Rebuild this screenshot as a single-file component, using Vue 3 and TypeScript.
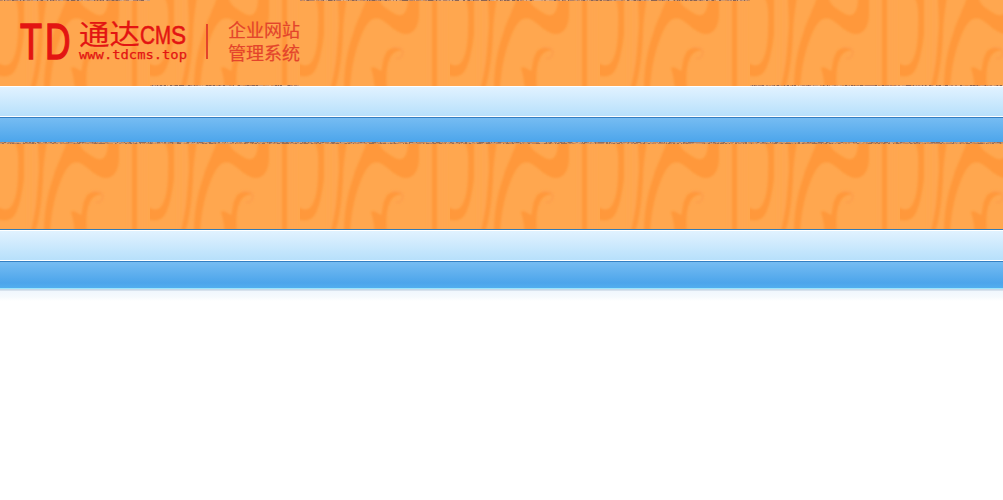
<script setup lang="ts">
interface Speck {
  x: number
  y: number
  w: number
  color: string
}

const tones = ['#8b6556', '#d29b70', '#b78262', '#e4ae7f', '#b58268', '#cba080', '#8a6450', '#d78d51']

function speckle(start: number, end: number, y: number, seed: number): Speck[] {
  const out: Speck[] = []
  let s = seed
  let x = start
  while (x < end) {
    s = (s * 16807) % 2147483647
    const w = Math.min(1 + (s % 2), end - x)
    out.push({ x, y, w, color: tones[(s >> 5) % tones.length] })
    x += w
  }
  return out
}

const headerSpecks: Speck[] = [
  ...speckle(0, 150, 0, 71),
  ...speckle(300, 750, 0, 913),
  ...speckle(150, 300, 85, 377),
  ...speckle(750, 1003, 85, 1291),
]
const seamSpecks: Speck[] = [...speckle(0, 1003, 0, 517), ...speckle(0, 1003, 1, 2909)]
</script>

<template>
  <div class="page">
    <header class="banner">
      <svg width="1003" height="86" viewBox="0 0 1003 86">
        <defs>
          <filter id="soft" x="-5%" y="-5%" width="110%" height="110%">
            <feGaussianBlur stdDeviation="1.2" />
          </filter>
          <pattern id="swirl" width="150" height="86" patternUnits="userSpaceOnUse">
            <rect width="150" height="86" fill="#ffa74f" />
            <g filter="url(#soft)">
              <path d="M28 -3V90M34 -3V90M128 -3V90M141 -3V90M146 -3V90" stroke="#ff9f58" stroke-width="1.5" opacity=".3" />
              <path d="M14 -3C18 2 19 12 18 30C18 48 14 63 8 65C4 66 1 65 -3 62V75C2 77 8 77 12 74C19 68 22 50 24 34V-3Z" fill="#ff983a" />
              <path d="M38 -3H47C45 10 43 22 43 36C42 54 40 72 35 90H30C36 69 37 52 38 38C40 22 38 10 38 -3Z" fill="#ff983a" />
              <path d="M67 -3H79C78 3 86 9 95 14C103 18 108 13 108 -3H119V14C119 26 114 34 106 34C96 34 90 24 80 19C71 15 65 26 61 36C55 51 51 68 50 90H44C44 66 48 48 53 34C57 20 64 8 67 -3Z" fill="#ff983a" />
              <path d="M102 51C96 46 88 47 85 55C82 61 83 67 81 71C77 69 74 66 71 68C73 74 74 80 75 90H87C86 77 86 66 90 58C93 52 97 50 102 51Z" fill="#ff983a" />
              <path d="M132 -3H137V90H132Z" fill="#ff983a" />
              <path d="M92 48Q102 46 103 52Q102 60 96 58" fill="none" stroke="#fc9c4c" stroke-width="2" opacity=".7" />
            </g>
          </pattern>
        </defs>
        <rect width="1003" height="86" fill="url(#swirl)" />
        <rect v-for="(p, i) in headerSpecks" :key="i" :x="p.x" :y="p.y" :width="p.w" height="1" :fill="p.color" />
        <g class="logo">
          <text class="latin td" x="20" y="58.6" textLength="22" lengthAdjust="spacingAndGlyphs">T</text>
          <text class="latin td" x="45" y="58.6" textLength="25.5" lengthAdjust="spacingAndGlyphs">D</text>
          <text class="cjk name" x="79" y="44.8" textLength="61" lengthAdjust="spacingAndGlyphs">通达</text>
          <text class="latin cms" x="140" y="44" textLength="15" lengthAdjust="spacingAndGlyphs">C</text>
          <text class="latin cms" x="155" y="44" textLength="16" lengthAdjust="spacingAndGlyphs">M</text>
          <text class="latin cms" x="171" y="44" textLength="15" lengthAdjust="spacingAndGlyphs">S</text>
          <text class="mono" x="79" y="59" textLength="108" lengthAdjust="spacingAndGlyphs">www.tdcms.top</text>
          <rect class="divider" x="206" y="24" width="2" height="35" />
          <text class="cjk slogan" x="228" y="36.6" textLength="72">企业网站</text>
          <text class="cjk slogan" x="228" y="59.6" textLength="72">管理系统</text>
        </g>
      </svg>
    </header>
    <div class="light-bar"></div>
    <div class="blue-bar"></div>
    <section class="banner second">
      <svg width="1003" height="2" viewBox="0 0 1003 2">
        <rect width="1003" height="2" fill="#c08a65" />
        <rect v-for="(p, i) in seamSpecks" :key="i" :x="p.x" :y="p.y" :width="p.w" height="1" :fill="p.color" opacity=".75" />
      </svg>
      <svg width="1003" height="85" viewBox="0 0 1003 85">
        <rect width="1003" height="86" fill="url(#swirl)" />
      </svg>
      <div class="edge"></div>
    </section>
    <div class="light-bar"></div>
    <div class="blue-bar lower"></div>
    <div class="shade"></div>
  </div>
</template>

<style scoped>
.page {
  width: 1003px;
  height: 500px;
  overflow: hidden;
  background: #fff;
}
svg {
  display: block;
}
.banner {
  height: 86px;
}
.second {
  height: 88px;
}
.edge {
  height: 1px;
  background: #347bb5;
}
.light-bar {
  box-sizing: border-box;
  height: 31px;
  border-top: 1px solid #fff;
  border-bottom: 1px solid #fff;
  background: linear-gradient(#e1f2ff, #b7e0fb);
}
.blue-bar {
  box-sizing: border-box;
  height: 25px;
  border-top: 1px solid #347fc2;
  background: linear-gradient(#76bcf2, #4ca5eb);
}
.lower {
  height: 27px;
  background: linear-gradient(#76bcf2, #4ca5eb 80%, #51aeef);
}
.shade {
  height: 13px;
  background: linear-gradient(#9ae5fc 0 1px, #c5d8e8 1px 2px, #d7e2ed 2px 3px, #f0f7fd 3px, #f6fafd 9px, #fff 13px);
}
.logo {
  fill: #e31412;
}
.latin {
  font-family: "Liberation Sans", sans-serif;
}
.td {
  font-size: 50px;
  stroke: #e31412;
  stroke-width: 1.5px;
}
.cms {
  font-size: 26px;
  stroke: #e31412;
  stroke-width: 0.6px;
}
.cjk {
  font-family: "Noto Sans CJK SC", sans-serif;
}
.name {
  font-size: 28px;
  stroke: #e31412;
  stroke-width: 0.2px;
}
.mono {
  font-family: "DejaVu Sans Mono", monospace;
  font-size: 12.5px;
  stroke: #e31412;
  stroke-width: 0.25px;
}
.slogan {
  font-size: 18px;
  fill: #e4442b;
  stroke: #e4442b;
  stroke-width: 0.2px;
}
.divider {
  fill: #e4442b;
}
</style>
